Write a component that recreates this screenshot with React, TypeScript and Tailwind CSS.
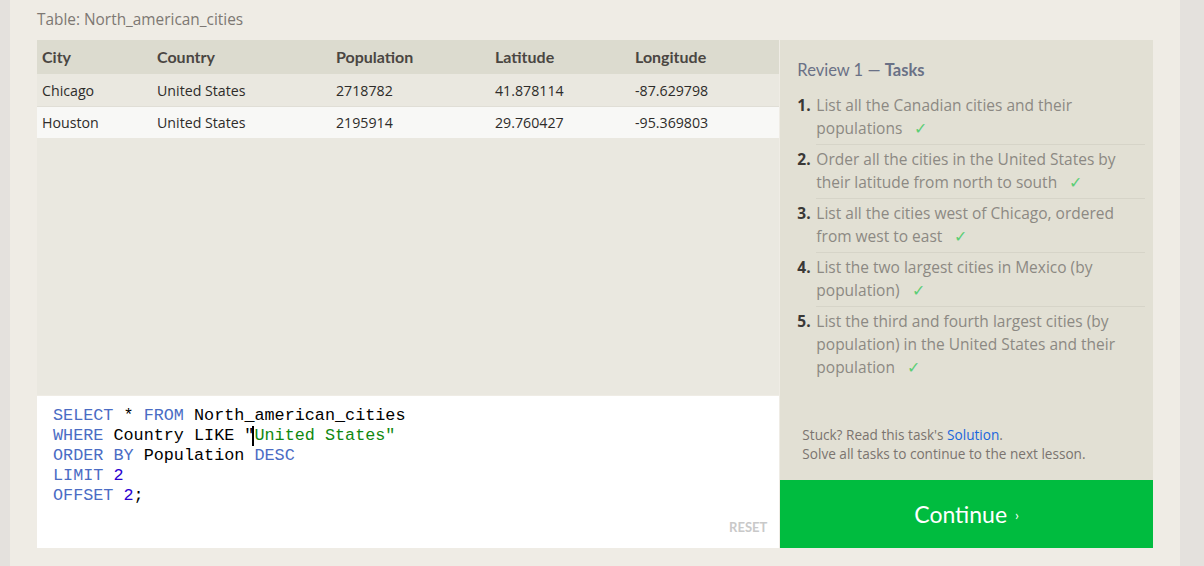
import React from 'react';

const rows = [
  { city: 'Chicago', country: 'United States', population: '2718782', lat: '41.878114', lng: '-87.629798' },
  { city: 'Houston', country: 'United States', population: '2195914', lat: '29.760427', lng: '-95.369803' },
];

const tasks = [
  ['List all the Canadian cities and their', 'populations'],
  ['Order all the cities in the United States by', 'their latitude from north to south'],
  ['List all the cities west of Chicago, ordered', 'from west to east'],
  ['List the two largest cities in Mexico (by', 'population)'],
  ['List the third and fourth largest cities (by', 'population) in the United States and their', 'population'],
];

const kw = 'text-[#4a6cc4]';
const num = 'text-[#2a00d0]';

function Check() {
  return <span className="ml-3 text-[#5cce76]">✓</span>;
}

export default function App() {
  return (
    <div className="flex h-[566px] w-[1204px] bg-[#e4e1dd] font-['Open_Sans',sans-serif]">
      <div className="ml-[10px] flex w-[1170px] flex-col bg-[#efece5] pl-[27px] pr-[27px]">
        <div className="h-[40px] pt-[8px] text-[15.4px] text-[#7d7873]">Table: North_american_cities</div>

        <div className="flex h-[508px]">
          {/* left: table + editor */}
          <div className="flex w-[743px] flex-col">
            <div className="flex-1 bg-[#eae8e0]">
              <div className="flex h-[34px] items-center bg-[#dcdbcf] font-['Lato',sans-serif] text-[16px] font-bold text-[#4a4642]">
                <div className="w-[115px] pl-[5px]">City</div>
                <div className="w-[179px] pl-[5px]">Country</div>
                <div className="w-[159px] pl-[5px]">Population</div>
                <div className="w-[140px] pl-[5px]">Latitude</div>
                <div className="flex-1 pl-[5px]">Longitude</div>
              </div>
              {rows.map((r, i) => (
                <div
                  key={r.city}
                  className={
                    'flex h-[32px] items-center text-[14.2px] text-[#2e2c2a] ' +
                    (i % 2 === 1 ? 'border-t border-[#e0ded6] bg-[#f8f8f6]' : 'bg-[#eae8e0] pt-[2px]')
                  }
                >
                  <div className="w-[115px] pl-[5px]">{r.city}</div>
                  <div className="w-[179px] pl-[5px]">{r.country}</div>
                  <div className="w-[159px] pl-[5px]">{r.population}</div>
                  <div className="w-[140px] pl-[5px]">{r.lat}</div>
                  <div className="flex-1 pl-[5px]">{r.lng}</div>
                </div>
              ))}
            </div>

            <div className="relative mt-px h-[152px] bg-white pl-[16px] pt-[10px] font-['Liberation_Mono',monospace] text-[16.8px] leading-[20px] text-black">
              <div>
                <span className={kw}>SELECT</span> * <span className={kw}>FROM</span> North_american_cities
              </div>
              <div>
                <span className={kw}>WHERE</span> Country LIKE "
                <span className="-ml-[10px] inline-block h-[20px] w-[10px] border-r-2 border-black align-top" />
                <span className="text-[#118811]">United States"</span>
              </div>
              <div>
                <span className={kw}>ORDER BY</span> Population <span className={kw}>DESC</span>
              </div>
              <div>
                <span className={kw}>LIMIT</span> <span className={num}>2</span>
              </div>
              <div>
                <span className={kw}>OFFSET</span> <span className={num}>2</span>;
              </div>
              <div className="absolute bottom-[11px] right-[12px] font-['Lato',sans-serif] text-[13px] font-bold text-[#c9c9c9]">
                RESET
              </div>
            </div>
          </div>

          {/* right: tasks */}
          <div className="ml-px flex w-[373px] flex-col">
            <div className="flex flex-1 flex-col bg-[#e2e0d4] pl-[17px] pr-[8px] pt-[18px]">
              <div className="font-['Lato',sans-serif] text-[16.5px] text-[#6a7186]">
                Review 1 — <span className="font-bold">Tasks</span>
              </div>
              <ol className="mt-[11px]">
                {tasks.map((lines, i) => (
                  <li key={i} className="flex text-[15.5px] leading-[23px]">
                    <span className="w-[19px] font-bold text-[#3a3836]">{i + 1}.</span>
                    <div
                      className={
                        'flex-1 pb-[4px] text-[#8c8983] ' +
                        (i < tasks.length - 1 ? 'mb-[3px] border-b border-[#d6d4c8]' : '')
                      }
                    >
                      {lines.map((l, j) => (
                        <div key={j}>
                          {l}
                          {j === lines.length - 1 && <Check />}
                        </div>
                      ))}
                    </div>
                  </li>
                ))}
              </ol>
              <div className="mt-auto pb-[17px] pl-[5px] text-[13.6px] leading-[19px] text-[#7a746f]">
                <div>
                  Stuck? Read this task's <span className="text-[#1a66dd]">Solution</span>.
                </div>
                <div>Solve all tasks to continue to the next lesson.</div>
              </div>
            </div>
            <button className="flex h-[68px] items-center justify-center bg-[#00bc3f] font-['Lato',sans-serif] text-[23px] text-white">
              Continue <span className="ml-[8px] text-[14px]">›</span>
            </button>
          </div>
        </div>
      </div>
    </div>
  );
}
